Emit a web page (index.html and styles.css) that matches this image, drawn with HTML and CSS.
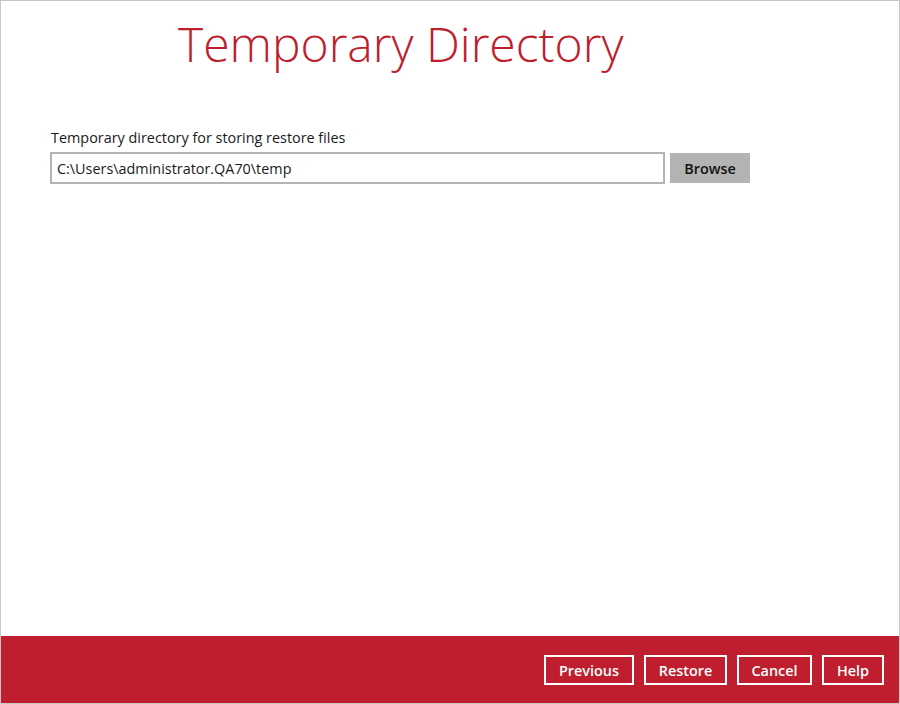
FILE: index.html
```html
<!DOCTYPE html>
<html lang="en">
<head>
<meta charset="utf-8">
<title>Temporary Directory</title>
<link rel="stylesheet" href="styles.css">
</head>
<body>
<div class="window">
  <main class="content">
    <h1 class="title">Temporary Directory</h1>
    <div class="field">
      <label class="field-label" for="tmpdir">Temporary directory for storing restore files</label>
      <div class="field-row">
        <input class="path-input" id="tmpdir" type="text" value="C:\Users\administrator.QA70\temp">
        <button class="browse-btn" type="button">Browse</button>
      </div>
    </div>
  </main>
  <footer class="footer">
    <button class="footer-btn btn-previous" type="button">Previous</button>
    <button class="footer-btn btn-restore" type="button">Restore</button>
    <button class="footer-btn btn-cancel" type="button">Cancel</button>
    <button class="footer-btn btn-help" type="button">Help</button>
  </footer>
</div>
</body>
</html>
```

FILE: styles.css
```css
* { box-sizing: border-box; }
html, body {
  margin: 0;
  padding: 0;
  background: #ffffff;
}
body {
  font-family: "Open Sans", "Noto Sans", sans-serif;
  color: #1a1a1a;
}
.window {
  width: 900px;
  height: 704px;
  border: 1px solid #c6c6c6;
  display: flex;
  flex-direction: column;
  background: #fff;
}
.content {
  flex: 1;
  padding: 15px 0 0 49px;
}
.title {
  margin: 0 0 0 128px;
  font-weight: 300;
  font-size: 48px;
  line-height: 56px;
  color: #be1e2d;
  letter-spacing: 0;
}
.field {
  margin-top: 56px;
}
.field-label {
  display: block;
  font-size: 14.4px;
  line-height: 20px;
  color: #1a1a1a;
  padding-left: 1px;
}
.field-row {
  display: flex;
  align-items: center;
  gap: 5px;
  margin-top: 4px;
}
.path-input {
  width: 615px;
  height: 32px;
  border: 2px solid #b4b4b4;
  padding: 0 5px;
  font-family: "Open Sans", "Noto Sans", sans-serif;
  font-size: 14.4px;
  color: #1a1a1a;
  background: #fff;
  outline: none;
}
.browse-btn {
  width: 80px;
  height: 30px;
  border: none;
  background: #b3b3b3;
  font-family: "Open Sans", "Noto Sans", sans-serif;
  font-weight: 600;
  font-size: 14.4px;
  color: #111;
  padding: 0;
}
.footer {
  height: 67px;
  background: #be1e2d;
  display: flex;
  justify-content: flex-end;
  align-items: center;
  gap: 10px;
  padding: 1px 15px 0 0;
}
.footer-btn {
  height: 30px;
  border: 2px solid #ffffff;
  background: transparent;
  color: #ffffff;
  font-family: "Open Sans", "Noto Sans", sans-serif;
  font-weight: 600;
  font-size: 14.4px;
  padding: 0;
  text-align: center;
}
.btn-previous { width: 90px; }
.btn-restore { width: 83px; }
.btn-cancel { width: 75px; }
.btn-help { width: 62px; }
```
